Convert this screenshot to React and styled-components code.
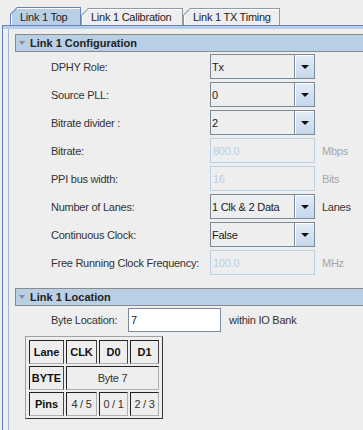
import React from 'react';
import styled, { createGlobalStyle } from 'styled-components';

const Global = createGlobalStyle`
  html, body {
    margin: 0;
    padding: 0;
    background: #eeeeee;
  }
`;

const Page = styled.div`
  width: 363px;
  height: 430px;
  overflow: hidden;
  background: #eeeeee;
  font-family: "Liberation Sans", Arial, sans-serif;
  font-size: 11px;
  letter-spacing: -0.25px;
  color: #333333;
  display: flex;
  flex-direction: column;
`;

const TabBar = styled.div`
  height: 25px;
  flex: none;
  display: flex;
  align-items: flex-end;
  padding-left: 10px;
`;

const TabEdge = styled.div`
  height: ${({ $active }) => ($active ? '18px' : '17px')};
  width: ${({ $w }) => $w}px;
  padding: 1px 1px 0 1px;
  box-sizing: border-box;
  background: ${({ $active }) => ($active ? '#6382bf' : '#8e9aa6')};
  clip-path: polygon(7px 0, 100% 0, 100% 100%, 0 100%, 0 7px);
  display: flex;
`;

const TabFace = styled.div`
  flex: 1;
  background: ${({ $active }) => ($active ? '#b8cfe5' : '#eeeeee')};
  box-shadow: inset 1px 1px 0 #ffffff;
  clip-path: polygon(6.4px 0, 100% 0, 100% 100%, 0 100%, 0 6.4px);
  display: flex;
  align-items: center;
  padding-left: 9px;
  color: #222222;
`;

const TabContent = styled.div`
  flex: 1;
  margin-left: 2px;
  border-top: 1px solid #6382bf;
  border-left: 1px solid #6382bf;
  display: flex;
  flex-direction: column;
`;

const Band = styled.div`
  height: 3px;
  flex: none;
  background: #b8cfe5;
`;

const Scroll = styled.div`
  flex: 1;
  margin-left: 5px;
  border-left: 1px solid #a3b8cc;
  padding-top: 5px;
  display: flex;
  flex-direction: column;
`;

const Header = styled.div`
  height: 16px;
  margin-left: 6px;
  margin-top: ${({ $top }) => $top || 0}px;
  border-top: 1px solid #8a8a8a;
  border-bottom: 1px solid #8a8a8a;
  border-left: 1px solid #8a8a8a;
  background: #b8cfe5;
  display: flex;
  align-items: center;
  gap: 4px;
  padding-left: 3px;
  font-weight: bold;
  letter-spacing: 0;
  color: #222222;
`;

const Caret = styled.span`
  width: 0;
  height: 0;
  border-left: 3.5px solid transparent;
  border-right: 3.5px solid transparent;
  border-top: 4px solid #8c8c8c;
  margin-right: 1px;
`;

const Form = styled.div`
  display: flex;
  flex-direction: column;
  gap: 3px;
  margin-top: 2px;
  padding-left: 42px;
`;

const Row = styled.div`
  height: 25px;
  display: grid;
  grid-template-columns: 159px 105px auto;
  align-items: center;
`;

const Label = styled.span`
  white-space: nowrap;
`;

const Unit = styled.span`
  padding-left: 7px;
  color: ${({ $dim }) => ($dim ? '#a6a6a6' : '#333333')};
`;

const Combo = styled.div`
  height: 25px;
  box-sizing: border-box;
  border: 1px solid #7a8a99;
  display: flex;
  background: #eeeeee;
`;

const ComboText = styled.div`
  flex: 1;
  display: flex;
  align-items: center;
  padding-left: 1px;
  color: #222222;
`;

const ArrowButton = styled.div`
  width: 19px;
  border-left: 1px solid #7a8a99;
  background: linear-gradient(to bottom, #e4edf6, #c4d7ea);
  box-shadow: inset 1px 1px 0 #ffffff;
  display: flex;
  align-items: center;
  justify-content: center;
`;

const Arrow = styled.span`
  width: 0;
  height: 0;
  border-left: 4px solid transparent;
  border-right: 4px solid transparent;
  border-top: 4px solid #111111;
  margin-top: 1px;
`;

const Field = styled.div`
  height: ${({ $h }) => $h || 25}px;
  width: ${({ $w }) => ($w ? `${$w}px` : 'auto')};
  box-sizing: border-box;
  border: 1px solid ${({ $disabled }) => ($disabled ? '#b8cfe5' : '#7a8a99')};
  background: ${({ $disabled }) => ($disabled ? '#eeeeee' : '#ffffff')};
  color: ${({ $disabled }) => ($disabled ? '#b8cfe5' : '#222222')};
  display: flex;
  align-items: center;
  padding-left: 2px;
`;

const ByteRow = styled.div`
  display: flex;
  align-items: center;
  margin-top: 2px;
  padding-left: 42px;
  height: 24px;
`;

const ByteLabel = styled.span`
  width: 77px;
  white-space: nowrap;
`;

const ByteNote = styled.span`
  margin-left: 8px;
`;

const PinTable = styled.div`
  align-self: flex-start;
  margin-left: 16px;
  margin-top: 4px;
  padding: 3px 3px 2px 3px;
  border-top: 1px solid #a0a0a0;
  border-left: 1px solid #a0a0a0;
  border-right: 1px solid #333333;
  border-bottom: 1px solid #333333;
  display: grid;
  grid-template-columns: 35px 31px 29px 29px;
  grid-auto-rows: 24px;
  gap: 2px;
`;

const Cell = styled.div`
  grid-column: span ${({ $span }) => $span || 1};
  box-sizing: border-box;
  border-top: 1px solid #222222;
  border-left: 1px solid #222222;
  border-right: 1px solid ${({ $bold }) => ($bold ? '#444444' : '#b0b0b0')};
  border-bottom: 1px solid #b0b0b0;
  display: flex;
  align-items: center;
  justify-content: center;
  font-weight: ${({ $bold }) => ($bold ? 'bold' : 'normal')};
  letter-spacing: ${({ $bold }) => ($bold ? '0' : '-0.25px')};
  color: ${({ $bold }) => ($bold ? '#111111' : '#333333')};
`;

const tabs = [
  { name: 'Link 1 Top', w: 71, active: true },
  { name: 'Link 1 Calibration', w: 102 },
  { name: 'Link 1 TX Timing', w: 97 },
];

const rows = [
  { label: 'DPHY Role:', kind: 'combo', value: 'Tx' },
  { label: 'Source PLL:', kind: 'combo', value: '0' },
  { label: 'Bitrate divider :', kind: 'combo', value: '2' },
  { label: 'Bitrate:', kind: 'field', value: '800.0', unit: 'Mbps', dim: true },
  { label: 'PPI bus width:', kind: 'field', value: '16', unit: 'Bits', dim: true },
  { label: 'Number of Lanes:', kind: 'combo', value: '1 Clk & 2 Data', unit: 'Lanes' },
  { label: 'Continuous Clock:', kind: 'combo', value: 'False' },
  { label: 'Free Running Clock Frequency:', kind: 'field', value: '100.0', unit: 'MHz', dim: true },
];

const App = () => {
  return (
    <Page>
      <Global />
      <TabBar>
        {tabs.map((t) => (
          <TabEdge key={t.name} $w={t.w} $active={t.active}>
            <TabFace $active={t.active}>{t.name}</TabFace>
          </TabEdge>
        ))}
      </TabBar>
      <TabContent>
        <Band />
        <Scroll>
          <Header>
            <Caret />
            Link 1 Configuration
          </Header>
          <Form>
            {rows.map((r) => (
              <Row key={r.label}>
                <Label>{r.label}</Label>
                {r.kind === 'combo' ? (
                  <Combo>
                    <ComboText>{r.value}</ComboText>
                    <ArrowButton>
                      <Arrow />
                    </ArrowButton>
                  </Combo>
                ) : (
                  <Field $disabled>{r.value}</Field>
                )}
                {r.unit ? <Unit $dim={r.dim}>{r.unit}</Unit> : <span />}
              </Row>
            ))}
          </Form>
          <Header $top={13}>
            <Caret />
            Link 1 Location
          </Header>
          <ByteRow>
            <ByteLabel>Byte Location:</ByteLabel>
            <Field $w={93} $h={24}>7</Field>
            <ByteNote>within IO Bank</ByteNote>
          </ByteRow>
          <PinTable>
            <Cell $bold>Lane</Cell>
            <Cell $bold>CLK</Cell>
            <Cell $bold>D0</Cell>
            <Cell $bold>D1</Cell>
            <Cell $bold>BYTE</Cell>
            <Cell $span={3}>Byte 7</Cell>
            <Cell $bold>Pins</Cell>
            <Cell>4 / 5</Cell>
            <Cell>0 / 1</Cell>
            <Cell>2 / 3</Cell>
          </PinTable>
        </Scroll>
      </TabContent>
    </Page>
  );
};

export default App;
